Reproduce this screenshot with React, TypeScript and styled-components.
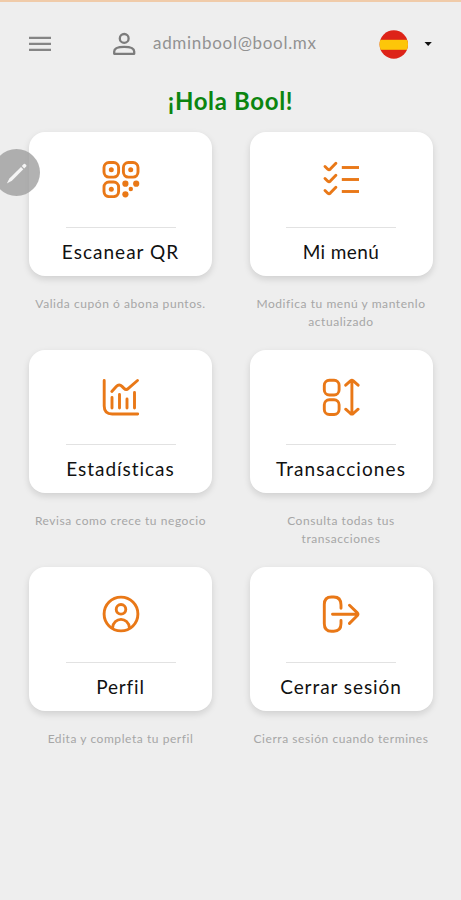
import React from "react";
import styled, { createGlobalStyle } from "styled-components";

const GlobalStyle = createGlobalStyle`
  *, *::before, *::after { box-sizing: border-box; }
  body {
    margin: 0;
    background: #eee;
    font-family: Lato, "Open Sans", sans-serif;
  }
`;

const Screen = styled.main`
  position: relative;
  min-height: 900px;
  overflow: hidden;
  background: #eee;
  border-top: 2px solid #f0cba9;
`;

const TopBar = styled.header`
  display: flex;
  align-items: center;
  height: 84px;
  padding: 0 28px;
`;

const IconButton = styled.button`
  display: flex;
  padding: 0;
  border: 0;
  background: none;
  color: #858585;
`;

const Account = styled.div`
  display: flex;
  align-items: center;
  gap: 17px;
  margin-left: 60px;
  color: #7c7c7c;
`;

const Email = styled.span`
  margin-bottom: 2px;
  font-size: 17px;
  line-height: 24px;
  letter-spacing: 0.7px;
  color: #929292;
`;

const LanguagePicker = styled.button`
  display: flex;
  align-items: center;
  gap: 16px;
  margin-left: auto;
  padding: 0;
  border: 0;
  background: none;
`;

const Greeting = styled.h1`
  margin: 0;
  height: 46px;
  font-size: 24px;
  line-height: 29px;
  font-weight: 700;
  letter-spacing: 0.65px;
  text-align: center;
  color: #0b8510;
`;

const Grid = styled.section`
  display: grid;
  grid-template-columns: repeat(2, 183px);
  grid-auto-rows: 217.7px;
  column-gap: 37.5px;
  padding-left: 29px;
`;

const Entry = styled.div`
  display: flex;
  flex-direction: column;
  align-items: center;
`;

const Card = styled.button`
  display: flex;
  flex-direction: column;
  align-items: center;
  width: 100%;
  height: 143.5px;
  padding: 28px 0 0;
  border: 0;
  border-radius: 16px;
  background: #fff;
  box-shadow: 0 3px 7px rgba(0, 0, 0, 0.13);
  font-family: inherit;
  color: #111;
`;

const Divider = styled.span`
  width: 110px;
  height: 1px;
  margin-top: 28.5px;
  background: #e2e2e2;
`;

const CardTitle = styled.span<{ $tracking: number }>`
  margin-top: 11px;
  font-size: 19px;
  line-height: 26px;
  letter-spacing: ${({ $tracking }) => $tracking}px;
  white-space: nowrap;
`;

const Caption = styled.p`
  margin: 19px 0 0;
  font-size: 12px;
  line-height: 18px;
  letter-spacing: 0.56px;
  text-align: center;
  white-space: pre-line;
  color: #a6a6a6;
`;

const EditBubble = styled.button`
  position: absolute;
  top: 147px;
  left: -7px;
  display: flex;
  align-items: center;
  justify-content: center;
  width: 47px;
  height: 47px;
  padding: 0;
  border: 0;
  border-radius: 50%;
  background: rgba(156, 156, 156, 0.78);
`;

const CardSvg = styled.svg`
  width: 38px;
  height: 38px;
  flex: none;
  fill: none;
  stroke: #e97817;
  stroke-width: 2.9;
  stroke-linecap: round;
  stroke-linejoin: round;
`;

const Dot = styled.circle`
  fill: #e97817;
  stroke: none;
`;

const QrIcon = () => (
  <CardSvg viewBox="0 0 38 38">
    <rect x="2" y="2.5" width="14.6" height="14.6" rx="5" />
    <rect x="21.4" y="2.5" width="14.6" height="14.6" rx="5" />
    <rect x="2" y="22" width="14.6" height="14.6" rx="5" />
    <Dot cx="9.3" cy="9.8" r="2.5" />
    <Dot cx="28.7" cy="9.8" r="2.5" />
    <Dot cx="9.3" cy="29.3" r="2.5" />
    <Dot cx="23.4" cy="23.7" r="3.1" />
    <Dot cx="34.2" cy="23.7" r="3.1" />
    <Dot cx="28.8" cy="29" r="2.2" />
    <Dot cx="23.4" cy="34.3" r="3.1" />
  </CardSvg>
);

const ChecklistIcon = () => (
  <CardSvg viewBox="0 0 38 38">
    {[6.5, 18.5, 30.5].map((y) => (
      <React.Fragment key={y}>
        <path d={`M3 ${y} l2.8 2.7 q1.3 1.1 2.5 -.1 l5.6 -5.9`} />
        <path d={`M19.8 ${y + 1} h17.2`} strokeLinecap="butt" />
      </React.Fragment>
    ))}
  </CardSvg>
);

const ChartIcon = () => (
  <CardSvg viewBox="0 0 38 38">
    <path d="M2.2 2.5 V28 Q2.2 36 10.2 36 H35.7" />
    <path d="M9.8 13.5 L14.3 8.6 Q17.2 5.6 20 8.4 L22 10.4 Q24.2 12.6 26.4 10.4 L35.5 2.5" />
    <path d="M10 19.5 V30 M17.5 16.5 V30 M25 21 V30 M32.5 14.5 V30" />
  </CardSvg>
);

const SortIcon = () => (
  <CardSvg viewBox="0 0 38 38">
    <rect x="2.3" y="2.2" width="14.8" height="14.8" rx="5" />
    <rect x="2.3" y="21.7" width="14.8" height="14.8" rx="5" />
    <path d="M29.9 2.8 V35.6 M23.7 7.2 L28.5 2.9 Q29.9 1.8 31.3 2.9 L36.1 7.2 M23.7 31.2 L28.5 35.5 Q29.9 36.6 31.3 35.5 L36.1 31.2" />
  </CardSvg>
);

const ProfileIcon = () => (
  <CardSvg viewBox="0 0 38 38">
    <circle cx="19" cy="19" r="16.9" />
    <circle cx="19" cy="14.3" r="4.8" />
    <path d="M10.5 33 C11.5 21.5 26.5 21.5 27.5 33" />
  </CardSvg>
);

const LogoutIcon = () => (
  <CardSvg viewBox="0 0 38 38">
    <path d="M19 13.2 V10 Q19 2 11.8 2 H9.5 Q2.3 2 2.3 9.5 V28.7 Q2.3 36.2 9.5 36.2 H11.8 Q19 36.2 19 28.5 V25.4" />
    <path d="M10.5 19.2 H35.3 M27.5 10.2 L35.4 17.9 Q36.5 19.2 35.4 20.5 L27.5 28.4" />
  </CardSvg>
);

const MenuIcon = () => (
  <svg width="24" height="18" viewBox="0 0 24 18" fill="none" stroke="currentColor" strokeWidth="2.3">
    <path d="M1 2.8 H23 M1 8.8 H23 M1 14.8 H23" />
  </svg>
);

const PersonIcon = () => (
  <svg width="24" height="24" viewBox="0 0 24 24" fill="none" stroke="currentColor" strokeWidth="2.3">
    <circle cx="12.2" cy="6.4" r="4.4" />
    <path d="M2.2 21.8 V19.5 C2.2 16.5 6.5 14.9 12.2 14.9 S22.2 16.5 22.2 19.5 V21.8 Z" strokeLinejoin="round" />
  </svg>
);

const SpainFlag = () => (
  <svg width="29" height="29" viewBox="0 0 29 29">
    <clipPath id="flag-round">
      <circle cx="14.8" cy="14.5" r="14.2" />
    </clipPath>
    <g clipPath="url(#flag-round)">
      <rect width="29" height="29" fill="#dd2318" />
      <rect y="9.8" width="29" height="10" fill="#fdc609" />
    </g>
  </svg>
);

const CaretIcon = () => (
  <svg width="9" height="6" viewBox="0 0 9 6">
    <path d="M.5 1 H7.8 L4.2 5 Z" fill="#111" />
  </svg>
);

const PencilIcon = () => (
  <svg width="22" height="22" viewBox="0 0 22 22" fill="#f5f5f5">
    <path d="M.8 21.4 L3.4 16.4 L15 4.9 L17.3 7.2 L5.9 18.7 Z" />
    <path d="M15.8 4 L17.8 2 Q18.5 1.4 19.1 2 L20.2 3.1 Q20.8 3.7 20.2 4.4 L18.2 6.4 Z" />
  </svg>
);

interface MenuEntry {
  title: string;
  tracking: number;
  caption: string;
  Icon: React.FC;
}

const ENTRIES: MenuEntry[] = [
  { title: "Escanear QR", tracking: 1.02, caption: "Valida cupón ó abona puntos.", Icon: QrIcon },
  { title: "Mi menú", tracking: 0.4, caption: "Modifica tu menú y mantenlo\nactualizado", Icon: ChecklistIcon },
  { title: "Estadísticas", tracking: 0.97, caption: "Revisa como crece tu negocio", Icon: ChartIcon },
  { title: "Transacciones", tracking: 1.1, caption: "Consulta todas tus\ntransacciones", Icon: SortIcon },
  { title: "Perfil", tracking: 0.8, caption: "Edita y completa tu perfil", Icon: ProfileIcon },
  { title: "Cerrar sesión", tracking: 0.93, caption: "Cierra sesión cuando termines", Icon: LogoutIcon },
];

export default function App() {
  return (
    <>
      <GlobalStyle />
      <Screen>
        <TopBar>
          <IconButton aria-label="Menú">
            <MenuIcon />
          </IconButton>
          <Account>
            <PersonIcon />
            <Email>adminbool@bool.mx</Email>
          </Account>
          <LanguagePicker aria-label="Idioma">
            <SpainFlag />
            <CaretIcon />
          </LanguagePicker>
        </TopBar>
        <Greeting>¡Hola Bool!</Greeting>
        <Grid>
          {ENTRIES.map(({ title, tracking, caption, Icon }) => (
            <Entry key={title}>
              <Card>
                <Icon />
                <Divider />
                <CardTitle $tracking={tracking}>{title}</CardTitle>
              </Card>
              <Caption>{caption}</Caption>
            </Entry>
          ))}
        </Grid>
        <EditBubble aria-label="Editar">
          <PencilIcon />
        </EditBubble>
      </Screen>
    </>
  );
}
